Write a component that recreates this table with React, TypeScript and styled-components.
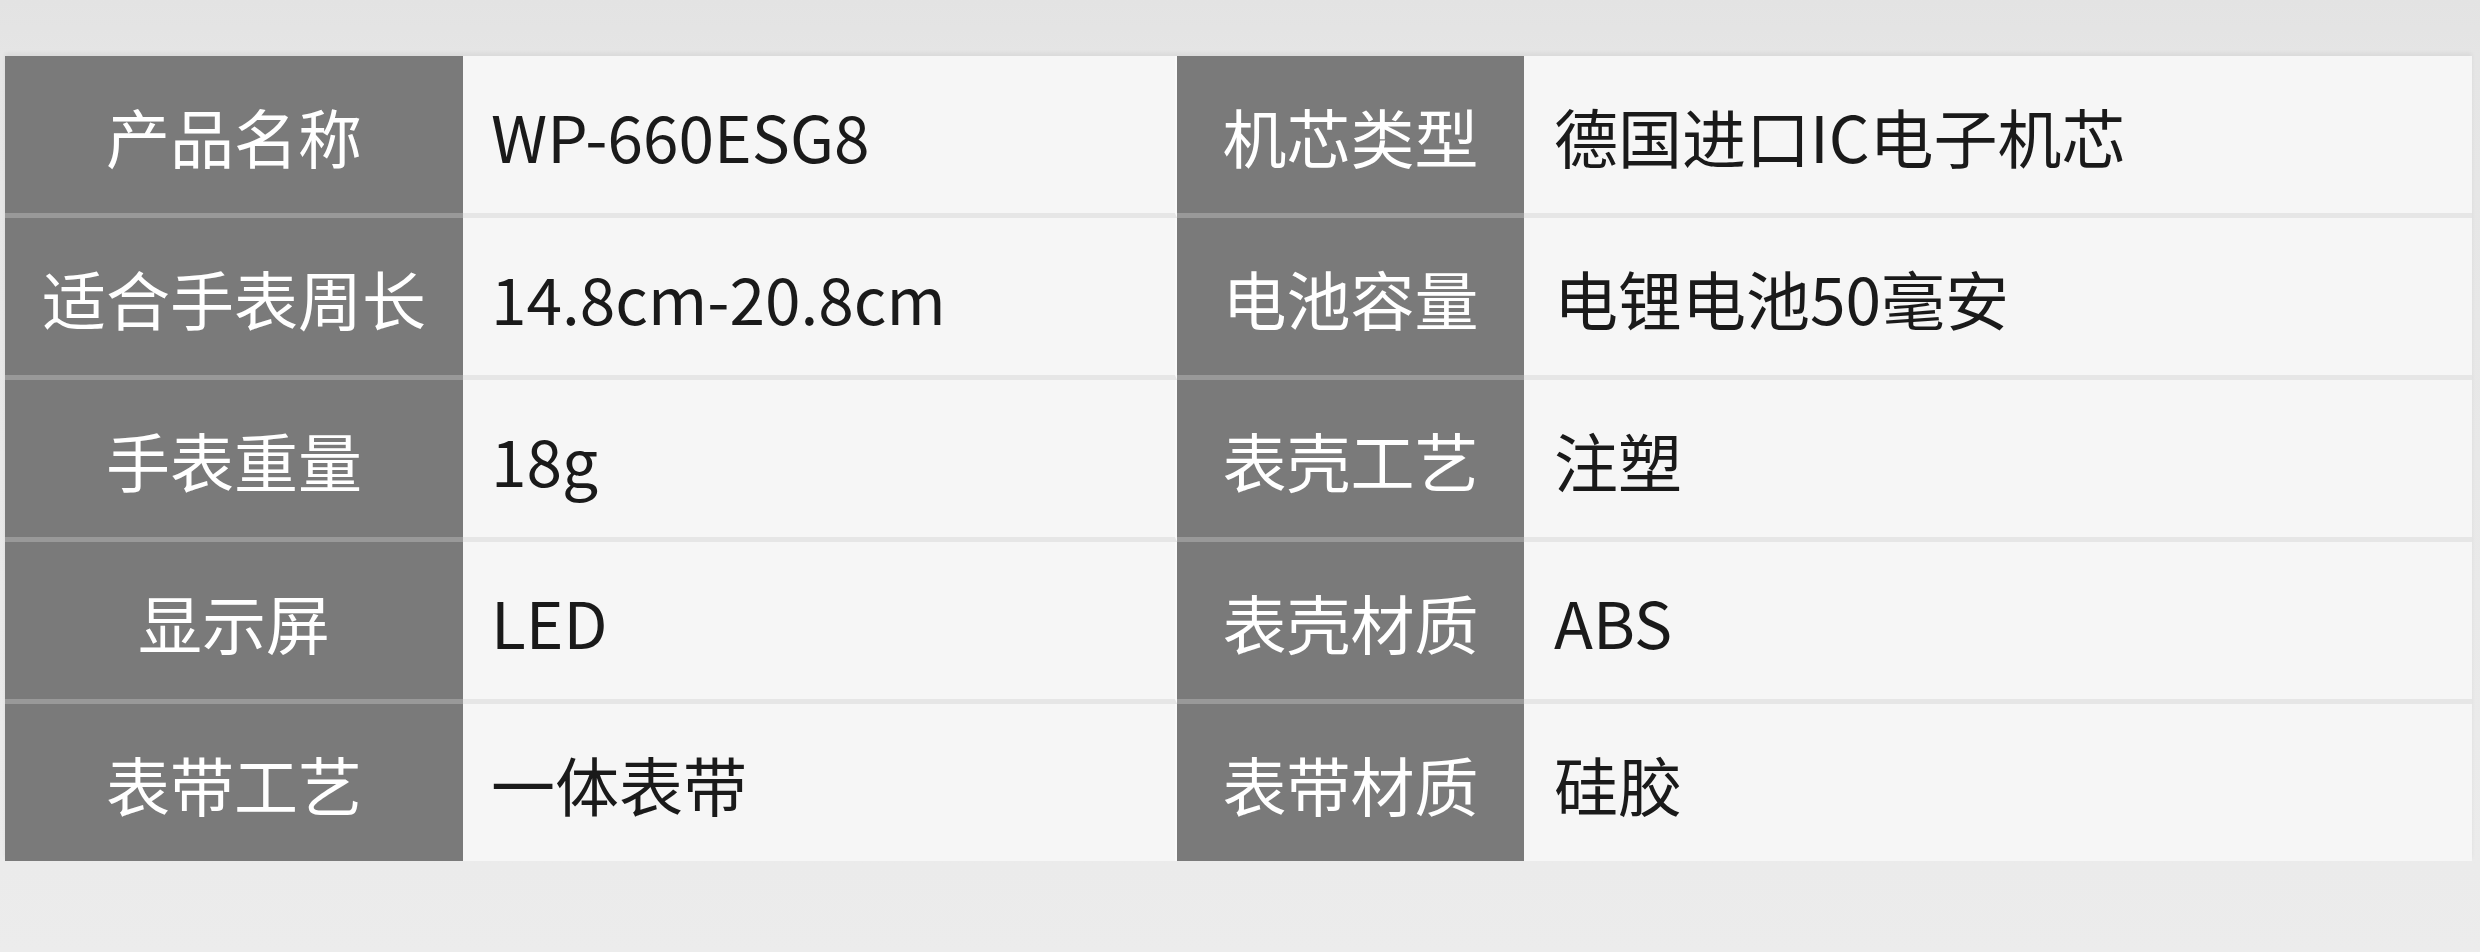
import React from 'react'
import styled, { createGlobalStyle } from 'styled-components'

const GlobalStyle = createGlobalStyle`
  html, body {
    margin: 0;
    padding: 0;
  }
  body {
    font-family: 'Noto Sans CJK SC', 'Noto Sans', sans-serif;
  }
`

const Page = styled.div`
  width: 2480px;
  height: 952px;
  box-sizing: border-box;
  padding: 56px 8px 0 5px;
  background: linear-gradient(#e3e3e3 0, #e5e5e5 56px, #ebebeb 866px, #ececec 100%);
`

const Table = styled.div`
  display: grid;
  grid-template-columns: 458px 714px 347px 948px;
  box-shadow: 0 -3px 4px rgba(0, 0, 0, 0.05);
`

const Cell = styled.div<{ $kind: 'label' | 'value'; $last: boolean; $pad?: number }>`
  height: 157px;
  display: flex;
  align-items: center;
  justify-content: ${p => (p.$kind === 'label' ? 'center' : 'flex-start')};
  padding-left: ${p => (p.$kind === 'label' ? 0 : p.$pad ?? 28)}px;
  background: ${p => (p.$kind === 'label' ? '#7a7a7a' : '#f6f6f6')};
  color: ${p => (p.$kind === 'label' ? '#ffffff' : '#1a1a1a')};
  border-bottom: ${p => (p.$last ? 'none' : `5px solid ${p.$kind === 'label' ? '#999999' : '#e6e6e6'}`)};
  font-size: 64px;
  line-height: 1;
  white-space: nowrap;
  &:nth-child(4n + 2) {
    border-right: 2px solid #fafafa;
  }
`

const rows: [string, string, string, string][] = [
  ['产品名称', 'WP-660ESG8', '机芯类型', '德国进口IC电子机芯'],
  ['适合手表周长', '14.8cm-20.8cm', '电池容量', '电锂电池50毫安'],
  ['手表重量', '18g', '表壳工艺', '注塑'],
  ['显示屏', 'LED', '表壳材质', 'ABS'],
  ['表带工艺', '一体表带', '表带材质', '硅胶'],
]

export default function App () {
  return (
    <>
      <GlobalStyle />
      <Page>
        <Table>
          {rows.map((row, i) => {
            const last = i === rows.length - 1
            return (
              <React.Fragment key={row[0]}>
                <Cell $kind='label' $last={last}>{row[0]}</Cell>
                <Cell $kind='value' $last={last}>{row[1]}</Cell>
                <Cell $kind='label' $last={last}>{row[2]}</Cell>
                <Cell $kind='value' $last={last} $pad={30}>{row[3]}</Cell>
              </React.Fragment>
            )
          })}
        </Table>
      </Page>
    </>
  )
}
